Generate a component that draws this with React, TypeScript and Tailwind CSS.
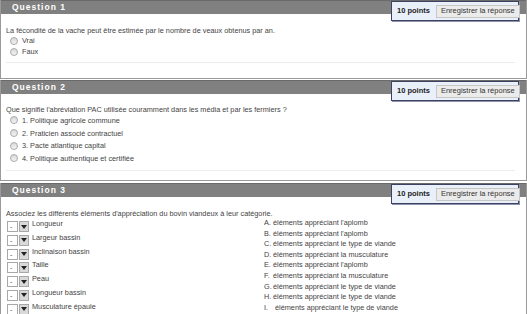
import React from "react";

/* ======================================================
DATA
====================================================== */

const q2Options = [
  "1. Politique agricole commune",
  "2. Praticien associé contractuel",
  "3. Pacte atlantique capital",
  "4. Politique authentique et certifiée",
];

const q3Items = [
  "Longueur",
  "Largeur bassin",
  "Inclinaison bassin",
  "Taille",
  "Peau",
  "Longueur bassin",
  "Musculature épaule",
];

const q3Categories = [
  ["A.", "éléments appréciant l'aplomb"],
  ["B.", "éléments appréciant l'aplomb"],
  ["C.", "éléments appréciant le type de viande"],
  ["D.", "éléments appréciant la musculature"],
  ["E.", "éléments appréciant l'aplomb"],
  ["F.", "éléments appréciant la musculature"],
  ["G.", "éléments appréciant le type de viande"],
  ["H.", "éléments appréciant le type de viande"],
  ["I.", "\u00a0éléments appréciant le type de viande"],
];

/* ======================================================
PIECES
====================================================== */

const Radio = () => (
  <span className="inline-block w-[8px] h-[8px] rounded-full border border-[#a9a9a9] bg-gradient-to-b from-[#d8d8d8] to-[#f4f4f4] mr-[4px] shrink-0" />
);

const PointsBox = () => (
  <div className="absolute right-[7px] top-[1px] w-[128px] h-[20px] flex items-center gap-[6px] pl-[5px] whitespace-nowrap bg-[#eaf0fa] border border-[#3d4263] shadow-[1px_1px_0_#8d93ad]">
    <span className="text-[7.5px] font-bold text-[#222]">10 points</span>
    <span className="h-[13px] px-[4px] flex items-center bg-[#ebebeb] border border-[#c6c6c6] text-[7.5px] text-[#333]">
      Enregistrer la réponse
    </span>
  </div>
);

const Block: React.FC<{ n: number; className: string; children: React.ReactNode }> = ({
  n,
  className,
  children,
}) => (
  <div className={`relative border-x border-b border-[#9a9a9a] ${className}`}>
    <div className="h-[14px] bg-[#808080] border-t border-[#6a6a6a] flex items-center pl-[11px]">
      <span className="text-[8.5px] font-bold text-white tracking-[1px]">Question {n}</span>
    </div>
    <PointsBox />
    {children}
  </div>
);

const Select = () => (
  <div className="flex mt-[3px] shrink-0 mr-[3px]">
    <span className="w-[11px] h-[11px] border border-[#a8a8a8] bg-white text-[7px] leading-[9px] pl-[2px]">-</span>
    <span className="ml-[1px] w-[10px] h-[11px] border border-[#a8a8a8] bg-[#d9d9d9] flex items-center justify-center">
      <svg width="6" height="4" viewBox="0 0 6 4">
        <path d="M0 0h6L3 4z" fill="#222" />
      </svg>
    </span>
  </div>
);

/* ======================================================
APP
====================================================== */

export default function App() {
  return (
    <div className="w-[527px] h-[314px] overflow-hidden bg-white font-['Liberation_Sans',Arial,sans-serif] text-[#444] text-[7.3px]">
      {/* QUESTION 1 */}
      <Block n={1} className="h-[79px]">
        <div className="px-[5px] pt-[11px] leading-[11px]">
          <p>La fécondité de la vache peut être estimée par le nombre de veaux obtenus par an.</p>
          <div className="pl-[4px] -mt-[1px]">
            {["Vrai", "Faux"].map((o) => (
              <div key={o} className="flex items-center h-[11px]">
                <Radio />
                {o}
              </div>
            ))}
          </div>
          <div className="mt-[5px] border-t border-[#ececec] mr-[6px]" />
        </div>
      </Block>

      {/* QUESTION 2 */}
      <Block n={2} className="mt-[1px] h-[101px]">
        <div className="px-[5px] pt-[10px] leading-[11px]">
          <p>Que signifie l'abréviation PAC utilisée couramment dans les média et par les fermiers ?</p>
          <div className="pl-[4px] -mt-[1px]">
            {q2Options.map((o) => (
              <div key={o} className="flex items-center h-[12.7px]">
                <Radio />
                {o}
              </div>
            ))}
          </div>
          <div className="mt-[5px] border-t border-[#ececec] mr-[6px]" />
        </div>
      </Block>

      {/* QUESTION 3 */}
      <Block n={3} className="mt-[2px] h-[140px]">
        <div className="px-[5px] pt-[11px] leading-[11px]">
          <p>Associez les différents éléments d'appréciation du bovin viandeux à leur catégorie.</p>
          <div className="flex -mt-[1px]">
            <div className="w-[258px] pl-[1px]">
              {q3Items.map((item) => (
                <div key={item} className="flex items-start h-[13.8px]">
                  <Select />
                  <span className="leading-[11px]">{item}</span>
                </div>
              ))}
            </div>
            <div className="leading-[10.6px]">
              {q3Categories.map(([l, t], i) => (
                <div key={i} className="flex">
                  <span className="w-[9px]">{l}</span>
                  <span>{t}</span>
                </div>
              ))}
            </div>
          </div>
        </div>
      </Block>
    </div>
  );
}
